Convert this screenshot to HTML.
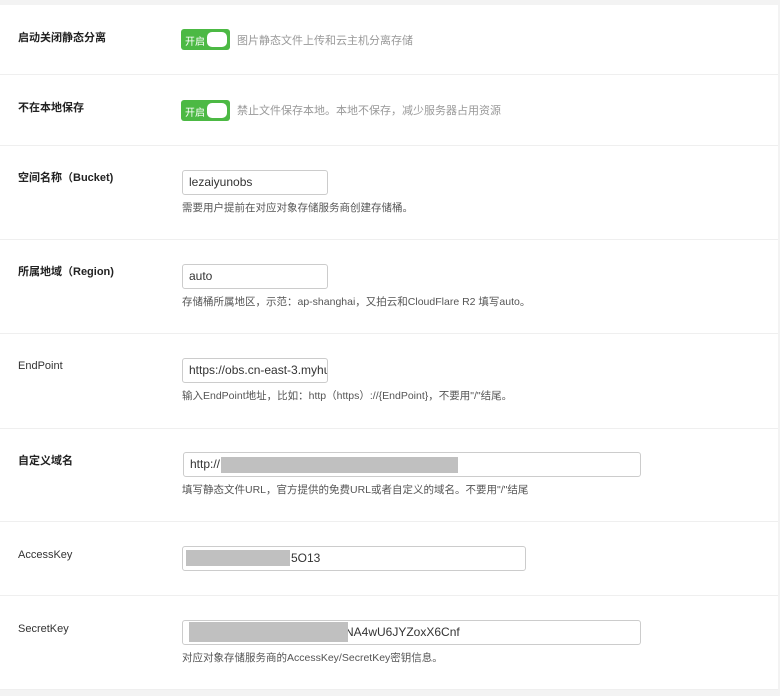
<!DOCTYPE html>
<html><head><meta charset="utf-8"><style>
*{margin:0;padding:0;box-sizing:border-box}
html,body{width:780px;height:696px;overflow:hidden;background:#f3f3f3;font-family:"Liberation Sans","Noto Sans CJK SC",sans-serif}
#w{position:absolute;left:0;top:5px;width:778px;height:684px;background:#fff}
.sep{position:absolute;left:0;width:778px;height:1px;background:#efefef}
.lb{position:absolute;left:18px;font-size:11px;font-weight:bold;color:#222;line-height:14px}
.lb.n{font-weight:normal;color:#333}
.tg{position:absolute;left:181px;width:49px;height:21px;background:#4cb944;border-radius:3px;color:#fff;font-size:10px;display:flex;align-items:center;padding-left:4px;padding-top:1px}
.tg i{position:absolute;left:26px;top:3px;width:20px;height:15px;background:#fff;border-radius:5px}
.td{position:absolute;left:237px;font-size:11px;color:#999;line-height:14px}
.in{position:absolute;left:182px;height:25px;border:1px solid #ccc;border-radius:3px;background:#fff;font-size:12px;color:#333;line-height:23px;padding-left:6px;white-space:nowrap;overflow:hidden}
.ds{position:absolute;left:182px;font-size:10.5px;color:#555;line-height:14px;white-space:nowrap}
.r{position:absolute;background:#c0c0c0}
</style></head><body>
<div id="w"></div>
<div class="sep" style="top:74px"></div>
<div class="sep" style="top:145px"></div>
<div class="sep" style="top:239px"></div>
<div class="sep" style="top:333px"></div>
<div class="sep" style="top:428px"></div>
<div class="sep" style="top:521px"></div>
<div class="sep" style="top:595px"></div>
<div class="sep" style="top:689px"></div>

<div class="lb" style="top:31px">启动关闭静态分离</div>
<div class="tg" style="top:29px">开启<i></i></div>
<div class="td" style="top:34px">图片静态文件上传和云主机分离存储</div>

<div class="lb" style="top:101px">不在本地保存</div>
<div class="tg" style="top:100px">开启<i></i></div>
<div class="td" style="top:104px">禁止文件保存本地。本地不保存，减少服务器占用资源</div>

<div class="lb" style="top:171px">空间名称（Bucket)</div>
<div class="in" style="top:170px;width:146px">lezaiyunobs</div>
<div class="ds" style="top:201px">需要用户提前在对应对象存储服务商创建存储桶。</div>

<div class="lb" style="top:265px">所属地域（Region)</div>
<div class="in" style="top:264px;width:146px">auto</div>
<div class="ds" style="top:295px">存储桶所属地区，示范：ap-shanghai，又拍云和CloudFlare R2 填写auto。</div>

<div class="lb n" style="top:359px">EndPoint</div>
<div class="in" style="top:358px;width:146px">https://obs.cn-east-3.myhuaweicloud.com</div>
<div class="ds" style="top:389px">输入EndPoint地址，比如：http（https）://{EndPoint}，不要用"/"结尾。</div>

<div class="lb" style="top:454px">自定义域名</div>
<div class="in" style="top:452px;left:183px;width:458px">http://</div>
<div class="r" style="left:221px;top:457px;width:237px;height:16px"></div>
<div class="ds" style="top:483px">填写静态文件URL，官方提供的免费URL或者自定义的域名。不要用"/"结尾</div>

<div class="lb n" style="top:548px">AccessKey</div>
<div class="in" style="top:546px;width:344px;padding-left:108px">5O13</div>
<div class="r" style="left:186px;top:550px;width:104px;height:16px"></div>

<div class="lb n" style="top:622px">SecretKey</div>
<div class="in" style="top:620px;width:459px;padding-left:162px">NA4wU6JYZoxX6Cnf</div>
<div class="r" style="left:189px;top:622px;width:159px;height:20px"></div>
<div class="ds" style="top:651px">对应对象存储服务商的AccessKey/SecretKey密钥信息。</div>
</body></html>
